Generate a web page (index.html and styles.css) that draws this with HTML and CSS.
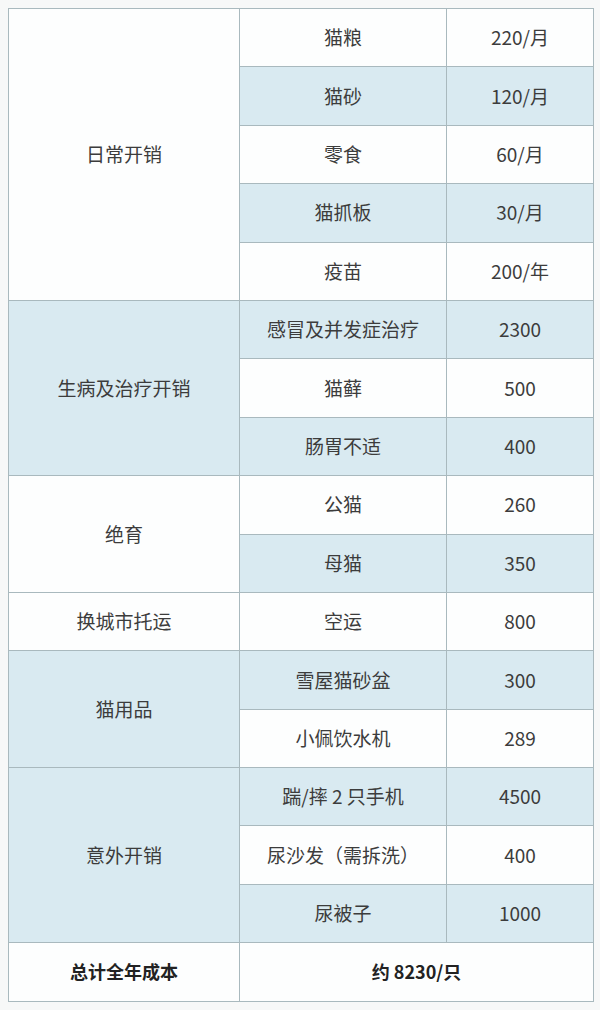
FILE: index.html
```html
<!DOCTYPE html>
<html lang="zh">
<head>
<meta charset="utf-8">
<link rel="stylesheet" href="styles.css">
</head>
<body>
<table class="cost">
  <colgroup><col class="c1"><col class="c2"><col class="c3"></colgroup>
  <tbody>
    <tr><td rowspan="5" class="w">日常开销</td><td class="w">猫粮</td><td class="w">220/月</td></tr>
    <tr><td class="b">猫砂</td><td class="b">120/月</td></tr>
    <tr><td class="w">零食</td><td class="w">60/月</td></tr>
    <tr><td class="b">猫抓板</td><td class="b">30/月</td></tr>
    <tr><td class="w">疫苗</td><td class="w">200/年</td></tr>
    <tr><td rowspan="3" class="b">生病及治疗开销</td><td class="b">感冒及并发症治疗</td><td class="b">2300</td></tr>
    <tr><td class="w">猫藓</td><td class="w">500</td></tr>
    <tr><td class="b">肠胃不适</td><td class="b">400</td></tr>
    <tr><td rowspan="2" class="w">绝育</td><td class="w">公猫</td><td class="w">260</td></tr>
    <tr><td class="b">母猫</td><td class="b">350</td></tr>
    <tr><td class="w">换城市托运</td><td class="w">空运</td><td class="w">800</td></tr>
    <tr><td rowspan="2" class="b">猫用品</td><td class="b">雪屋猫砂盆</td><td class="b">300</td></tr>
    <tr><td class="w">小佩饮水机</td><td class="w">289</td></tr>
    <tr><td rowspan="3" class="b">意外开销</td><td class="b">踹/摔 2 只手机</td><td class="b">4500</td></tr>
    <tr><td class="w">尿沙发（需拆洗）</td><td class="w">400</td></tr>
    <tr><td class="b">尿被子</td><td class="b">1000</td></tr>
    <tr><td class="w strong">总计全年成本</td><td colspan="2" class="w strong">约 8230/只</td></tr>
  </tbody>
</table>
</body>
</html>
```

FILE: styles.css
```css
html, body {
  margin: 0;
  padding: 0;
  background: #f7f8f8;
}
body {
  padding: 8px 7px 8px 8px;
  font-family: "Noto Sans CJK SC", "Noto Sans", sans-serif;
}
.cost {
  border-collapse: collapse;
  width: 585px;
  table-layout: fixed;
  border: 1px solid #a3b2b6;
  color: #3c3c3c;
  font-size: 19px;
}
.c1 { width: 231px; }
.c2 { width: 207px; }
.c3 { width: 147px; }
.cost tr { height: 58.4px; }
.cost td {
  border: 1px solid #a9b9be;
  text-align: center;
  vertical-align: middle;
  padding: 0;
  line-height: 1.2;
}
.w { background: #fdfefe; }
.b { background: #d9eaf1; }
.strong { font-weight: 700; color: #222; font-size: 18px; }
```
